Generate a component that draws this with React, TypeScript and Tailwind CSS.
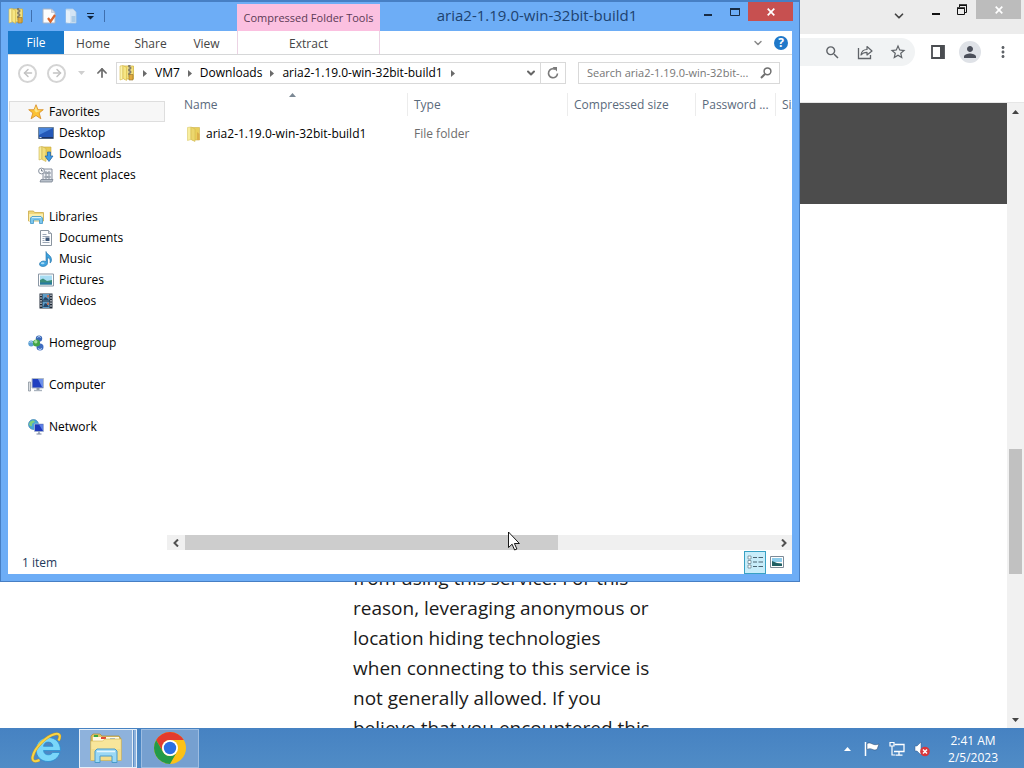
import type { ReactNode } from 'react';
import { ChevronDown, ArrowLeft, ArrowRight, ArrowUp, Search } from 'lucide-react';
import { MdSearch, MdStarOutline, MdPerson, MdMoreVert } from 'react-icons/md';

const FONT = "font-['Open_Sans','Noto_Sans',sans-serif]";

function ZipFolderIcon() {
  return (
    <svg className="size-4 shrink-0" viewBox="0 0 16 16" aria-hidden="true">
      <path d="M5 1h9.500v13H5z" fill="#f3e07c" stroke="#d0ad34" strokeWidth=".7" />
      <path d="M1 1l3-.5V14l-3 1z" fill="#fbf3ae" stroke="#d6b94a" strokeWidth=".6" />
      <path d="M4 .5L7.500 2.500V15.500L4 13.500z" fill="#f6e685" stroke="#cfae3a" strokeWidth=".5" />
      <path d="M9.500 0h2.500v12h-2.500z" fill="#b5ad8b" />
      <path d="M9 1h2M10.500 3h2M9 5h2M10.500 7h2M9 9h2" stroke="#57534a" strokeWidth="1.200" />
      <path d="M10 9.500h4v5.500h-4z" fill="#e0a93f" stroke="#94742a" strokeWidth=".6" />
    </svg>
  );
}

function FolderIcon() {
  return (
    <svg className="size-4 shrink-0" viewBox="0 0 16 16" aria-hidden="true">
      <path d="M6 1.500h7.500V14H6z" fill="#e9cf5b" stroke="#cfb34a" strokeWidth=".6" />
      <path d="M1.500 1.500L5 1v12.500l-3.500 1z" fill="#f8ee9e" stroke="#dcc968" strokeWidth=".6" />
      <path d="M5 1l4 2v12.500l-4-2z" fill="#ecd76d" stroke="#d4ba51" strokeWidth=".6" />
      <path d="M11 6l2.500 2v6H11z" fill="#dcae4a" />
    </svg>
  );
}

function PropertiesIcon() {
  return (
    <svg className="size-4" viewBox="0 0 16 16" aria-hidden="true">
      <path d="M2 1h8.500L14 4.500V15H2z" fill="#fdfdfd" stroke="#a9b3c4" />
      <path d="M10.500 1v3.500H14z" fill="#d5dce8" stroke="#a9b3c4" strokeWidth=".5" />
      <path d="M7 10l2.500 3.500L14 7" fill="none" stroke="#d9652d" strokeWidth="2.200" />
    </svg>
  );
}

function NewFolderIcon() {
  return (
    <svg className="size-4" viewBox="0 0 16 16" aria-hidden="true">
      <path d="M3 1h7l3 3v11H3z" fill="#d3e4f4" stroke="#b2cbe4" strokeWidth=".8" />
      <path d="M3 2l4 1.500V15l-4-1z" fill="#e6f0f9" />
      <path d="M8.500 8h4v6h-4z" fill="#a9cbe8" />
    </svg>
  );
}

function StarIcon() {
  return (
    <svg className="size-4" viewBox="0 0 16 16" aria-hidden="true">
      <path d="M8 .7l2 5h5.300L11.200 9l1.700 5.800L8 11.500l-4.900 3.300L4.800 9 .7 5.700H6z" fill="#fbc233" stroke="#d78a24" strokeWidth=".8" />
      <path d="M8 2.500l1.300 4h3.500L8 8.500 6.300 6z" fill="#fde58a" />
    </svg>
  );
}

function DesktopIcon() {
  return (
    <svg className="size-4" viewBox="0 0 16 16" aria-hidden="true">
      <path d="M.5 2.500h15v11H.5z" fill="#2458b8" stroke="#6f8399" />
      <path d="M1 3h14L1 10z" fill="#4a86dc" />
      <path d="M1 12h14v1.500H1z" fill="#1d3263" />
      <path d="M1.500 12.500h2" stroke="#c9dbf0" />
    </svg>
  );
}

function DownloadsIcon() {
  return (
    <svg className="size-4" viewBox="0 0 16 16" aria-hidden="true">
      <path d="M5 1h8v12H5z" fill="#e9cc55" stroke="#c9a73c" strokeWidth=".6" />
      <path d="M1 1l3-.5V13l-3 1z" fill="#f8ec9d" stroke="#cbb14f" strokeWidth=".6" />
      <path d="M4 .5l4 2v13l-4-2z" fill="#f2de7c" stroke="#cbb14f" strokeWidth=".6" />
      <path d="M9.500 6h3v4H15l-4 5.500L7 10h2.500z" fill="#3f9ae6" stroke="#1e61a8" strokeWidth=".7" />
    </svg>
  );
}

function RecentIcon() {
  return (
    <svg className="size-4" viewBox="0 0 16 16" aria-hidden="true">
      <path d="M5 2h9v11H5z" fill="#eef1f5" stroke="#7b8593" strokeWidth=".9" />
      <path d="M7 5h2v2H7zM10 5h2v2h-2zM7 9h2v2H7zM10 9h2v2h-2z" fill="#fff" stroke="#6b7787" strokeWidth=".8" />
      <path d="M3 12.500h12l-1 2.500H2z" fill="#b8c0ca" stroke="#7b8593" strokeWidth=".8" />
      <circle cx="3.500" cy="4" r="2.900" fill="#fbfcfd" stroke="#7b8593" strokeWidth=".9" />
      <path d="M3.500 2.200V4H5" fill="none" stroke="#566272" strokeWidth=".8" />
    </svg>
  );
}

function LibrariesIcon() {
  return (
    <svg className="size-4" viewBox="0 0 16 16" aria-hidden="true">
      <path d="M.5 2h5l1 1.500h9V12H.5z" fill="#f0d77a" stroke="#c9aa49" strokeWidth=".8" />
      <path d="M1 5h14v7H1z" fill="#fbeeac" />
      <path d="M2.500 14.500V9L4 7.500h9L14.500 9v5.500h-3V11h-6v3.500z" fill="#7cc7ee" stroke="#4297c8" strokeWidth=".8" />
      <path d="M4 8.500h9" stroke="#d6f1fd" />
    </svg>
  );
}

function DocumentsIcon() {
  return (
    <svg className="size-4" viewBox="0 0 16 16" aria-hidden="true">
      <path d="M2.500.5h8l3 3v12h-11z" fill="#fcfdfe" stroke="#8a949f" />
      <path d="M10.500.5v3h3" fill="#d5dae1" stroke="#8a949f" strokeWidth=".8" />
      <path d="M4.500 4.500h4M4.500 6.500h7M4.500 8.500h2M4.500 10.500h2M4.500 12.500h7" stroke="#9aa5b4" />
      <path d="M7.500 7.500h4V11h-4z" fill="#3d5678" />
    </svg>
  );
}

function MusicIcon() {
  return (
    <svg className="size-4" viewBox="0 0 16 16" aria-hidden="true">
      <path d="M8 .5c.5 3 5.500 3.500 5.500 8.500 0 1-.5 2.500-1.500 3 .8-3-.5-5-2.500-5.500v5.500c0 2-2 3.500-4.500 3.500s-3.500-1-3.500-2.500S3.500 10 5.500 10c1 0 1.800.2 2.500.7z" fill="#3fa3df" stroke="#1d6da5" strokeWidth=".6" />
      <ellipse cx="4.700" cy="12.200" rx="1.800" ry="1" fill="#a9dcf7" />
    </svg>
  );
}

function PicturesIcon() {
  return (
    <svg className="size-4" viewBox="0 0 16 16" aria-hidden="true">
      <path d="M.5 2h15v12H.5z" fill="#fff" stroke="#8b97a5" />
      <path d="M2 3.500h12V9H2z" fill="#a7dcf3" />
      <path d="M2 8l3-1.500L9 9l5-1v4.500H2z" fill="#3b8d78" />
      <path d="M2 10.500h12v2H2z" fill="#2879a0" />
    </svg>
  );
}

function VideosIcon() {
  return (
    <svg className="size-4" viewBox="0 0 16 16" aria-hidden="true">
      <path d="M1.500.5h13v15h-13z" fill="#202a38" />
      <path d="M4.500 1h7v6.500h-7zM4.500 8.500h7V15h-7z" fill="#5d9cc6" />
      <path d="M5 7l2-3 2 1 2 2zM5 14l2-4 2 1 2 3z" fill="#24476a" />
      <path d="M9 2h2v2.500H9zM9 9.500h2V12H9z" fill="#b8725c" />
      <path d="M3 1.500v13M13 1.500v13" stroke="#e8edf2" strokeWidth="1.200" strokeDasharray="1.500 1.200" />
    </svg>
  );
}

function HomegroupIcon() {
  return (
    <svg className="size-4" viewBox="0 0 16 16" aria-hidden="true">
      <circle cx="3.200" cy="8.500" r="2.900" fill="#5b9fd3" />
      <circle cx="11" cy="3.600" r="3.200" fill="#3a68b8" />
      <circle cx="12" cy="12" r="3.500" fill="#3f6cc0" />
      <circle cx="8.500" cy="8" r="3.600" fill="#43a548" />
      <circle cx="7.800" cy="6.800" r="1.700" fill="#a7dfa0" />
      <path d="M9.300 2.500c1-1.200 2.600-1.200 3.400 0M10 13.300c1 1.500 3 1.500 4 0M1.500 7.500c1-1 2-1 3 0" stroke="#c4def6" fill="none" />
    </svg>
  );
}

function ComputerIcon() {
  return (
    <svg className="size-4" viewBox="0 0 16 16" aria-hidden="true">
      <path d="M.5 5h2v9h-2z" fill="#d9dde2" stroke="#8c949e" strokeWidth=".8" />
      <path d="M4 1.500h11.500V11H4z" fill="#1f3fc0" stroke="#b0bac6" />
      <path d="M10 2h5v8h-1z" fill="#6d90ea" />
      <path d="M8.500 11h3v2h-3z" fill="#8d98a6" />
      <path d="M6 13.500h8" stroke="#aab3be" strokeWidth="1.400" />
    </svg>
  );
}

function NetworkIcon() {
  return (
    <svg className="size-4" viewBox="0 0 16 16" aria-hidden="true">
      <circle cx="5.500" cy="5.500" r="5" fill="#4aa5d8" stroke="#3178a8" strokeWidth=".6" />
      <path d="M2 3c2-2 4-2 5-.5-1 2-3 1-3 3.500S2 7 1 5.500z" fill="#83cf7b" />
      <path d="M6.500 5h9v7.500h-9z" fill="#1e38bb" stroke="#a9b8d0" strokeWidth=".8" />
      <path d="M11 5.500h4V12z" fill="#5c7fe6" />
      <path d="M11 12.500v2M8.500 15h5" stroke="#7885a0" strokeWidth="1.200" />
    </svg>
  );
}

type NavItem = { label: string; icon: ReactNode };
const groups: { head: NavItem; items: NavItem[] }[] = [
  {
    head: { label: 'Favorites', icon: <StarIcon /> },
    items: [
      { label: 'Desktop', icon: <DesktopIcon /> },
      { label: 'Downloads', icon: <DownloadsIcon /> },
      { label: 'Recent places', icon: <RecentIcon /> },
    ],
  },
  {
    head: { label: 'Libraries', icon: <LibrariesIcon /> },
    items: [
      { label: 'Documents', icon: <DocumentsIcon /> },
      { label: 'Music', icon: <MusicIcon /> },
      { label: 'Pictures', icon: <PicturesIcon /> },
      { label: 'Videos', icon: <VideosIcon /> },
    ],
  },
  { head: { label: 'Homegroup', icon: <HomegroupIcon /> }, items: [] },
  { head: { label: 'Computer', icon: <ComputerIcon /> }, items: [] },
  { head: { label: 'Network', icon: <NetworkIcon /> }, items: [] },
];

function Sidebar() {
  return (
    <nav className="flex w-[159px] shrink-0 flex-col gap-[21px] pl-px pt-2 text-black">
      {groups.map((g, i) => (
        <div key={g.head.label} className="w-[156px]">
          <a
            href="#"
            className={
              i === 0
                ? 'flex h-[21px] items-center gap-[5px] border border-[#dedede] bg-[#f7f7f7] pl-[18px]'
                : 'flex h-[21px] items-center gap-[5px] pl-[19px]'
            }
          >
            {g.head.icon}
            {g.head.label}
          </a>
          {g.items.map((it) => (
            <a key={it.label} href="#" className="flex h-[21px] items-center gap-[5px] pl-[29px]">
              {it.icon}
              {it.label}
            </a>
          ))}
        </div>
      ))}
    </nav>
  );
}

function Crumb() {
  return (
    <svg className="mx-2 h-[7px] w-1 shrink-0" viewBox="0 0 4 7" aria-hidden="true">
      <path d="M0 0l4 3.500L0 7z" fill="#6a6a6a" />
    </svg>
  );
}

function TitleBar() {
  return (
    <header className="flex h-[31px] shrink-0 items-start">
      <div className="flex h-[31px] w-[237px] shrink-0 items-center pl-2">
        <ZipFolderIcon />
        <span className="ml-[7px] mr-[9px] h-3 w-px bg-[#3f6fae]" />
        <button aria-label="Properties"><PropertiesIcon /></button>
        <button aria-label="New folder" className="ml-[6px]"><NewFolderIcon /></button>
        <button aria-label="Customize" className="ml-2 pt-[2px]">
          <svg className="h-[7px] w-[7px]" viewBox="0 0 7 7" aria-hidden="true">
            <path d="M0 .5h7" stroke="#10243c" />
            <path d="M0 3h7L3.500 6.500z" fill="#10243c" />
          </svg>
        </button>
        <span className="ml-[10px] h-3 w-px bg-[#3f6fae]" />
      </div>
      <div className="mt-1 flex h-[27px] w-[143px] shrink-0 items-center justify-center bg-[#fbc0e0] text-[11px] text-[#5b3a55]">
        Compressed Folder Tools
      </div>
      <h1 className="h-[31px] grow text-center text-[15px] leading-[31px] text-[#1d426f]">
        aria2-1.19.0-win-32bit-build1
      </h1>
      <div className="flex shrink-0 pr-[7px] pt-[2px]">
        <button aria-label="Minimize" className="flex h-[19px] w-[27px] items-center justify-center">
          <svg className="h-3 w-3" viewBox="0 0 12 12" aria-hidden="true">
            <path d="M2 9h8" stroke="#182c45" strokeWidth="2" />
          </svg>
        </button>
        <button aria-label="Maximize" className="flex h-[19px] w-[27px] items-center justify-center">
          <svg className="h-3 w-3" viewBox="0 0 12 12" aria-hidden="true">
            <path d="M1.500 2.500h9v7h-9z" fill="none" stroke="#182c45" />
            <path d="M1 3h10" stroke="#182c45" strokeWidth="2" />
          </svg>
        </button>
        <button aria-label="Close" className="flex h-[19px] w-[45px] items-center justify-center bg-[#c75050]">
          <svg className="size-2" viewBox="0 0 8 8" aria-hidden="true">
            <path d="M.7.7l6.600 6.600M7.300.7L.7 7.300" stroke="#fff" strokeWidth="1.700" />
          </svg>
        </button>
      </div>
    </header>
  );
}

function RibbonTabs() {
  return (
    <div className="flex h-6 shrink-0 items-stretch border-b border-[#d6d7d8] text-[#444]">
      <button className="w-14 bg-[#1979ca] pt-px text-white">File</button>
      <button className="w-[58px] pt-[2px]">Home</button>
      <button className="w-[57px] pt-[2px]">Share</button>
      <button className="w-[55px] pt-[2px]">View</button>
      <button className="ml-[3px] w-[143px] border-x border-[#ecd3e4] pt-[2px] text-center">Extract</button>
      <div className="ml-auto flex items-center gap-[10px] pr-1">
        <button aria-label="Collapse ribbon"><ChevronDown className="size-3 text-[#8a8a8a]" strokeWidth={3} /></button>
        <button aria-label="Help" className="flex size-[14px] items-center justify-center rounded-full bg-[#1f78c9] text-[12px] font-bold leading-[14px] text-white">?</button>
      </div>
    </div>
  );
}

function AddressRow() {
  return (
    <div className="flex h-[38px] shrink-0 items-center pb-[2px] pl-[10px] pr-3">
      <button aria-label="Back" className="flex size-[19px] items-center justify-center rounded-full border-2 border-[#d4d4d4] text-[#c2c2c2]">
        <ArrowLeft className="size-3" strokeWidth={3} />
      </button>
      <button aria-label="Forward" className="ml-[10px] flex size-[19px] items-center justify-center rounded-full border-2 border-[#d4d4d4] text-[#c2c2c2]">
        <ArrowRight className="size-3" strokeWidth={3} />
      </button>
      <button aria-label="Recent locations" className="ml-3">
        <svg className="h-1 w-[7px]" viewBox="0 0 7 4" aria-hidden="true"><path d="M0 0h7L3.500 4z" fill="#cfcfcf" /></svg>
      </button>
      <button aria-label="Up" className="ml-[10px]">
        <ArrowUp className="size-[14px] text-[#6d6d6d]" strokeWidth={3} />
      </button>
      <div className="ml-[7px] flex h-[22px] min-w-0 grow items-center border border-[#d9d9d9] pl-[2px] text-black">
        <ZipFolderIcon />
        <Crumb />
        <a href="#">VM7</a>
        <Crumb />
        <a href="#">Downloads</a>
        <Crumb />
        <a href="#" className="whitespace-nowrap">aria2-1.19.0-win-32bit-build1</a>
        <Crumb />
        <button aria-label="Previous locations" className="ml-auto mr-[3px]"><ChevronDown className="size-3 text-[#666]" strokeWidth={4} /></button>
        <button aria-label="Refresh" className="flex h-full w-[25px] items-center justify-center border-l border-[#d9d9d9]">
          <svg className="size-3" viewBox="0 0 12 12" aria-hidden="true">
            <path d="M8 2.200A4.500 4.500 0 1 0 10.500 6.500" fill="none" stroke="#7a7a7a" strokeWidth="1.600" />
            <path d="M5.500 0H10v4.500z" fill="#7a7a7a" />
          </svg>
        </button>
      </div>
      <label className="ml-3 flex h-[22px] w-[202px] shrink-0 items-center border border-[#d9d9d9] pl-2 pr-[7px]">
        <input aria-label="Search folder" placeholder="Search aria2-1.19.0-win-32bit-..." className="w-0 grow bg-transparent text-[11px] outline-none placeholder:text-[#767676]" />
        <svg className="size-3 shrink-0" viewBox="0 0 12 12" aria-hidden="true">
          <circle cx="7.500" cy="4.300" r="3.400" fill="none" stroke="#6f6f6f" strokeWidth="1.500" />
          <path d="M5 7L1 11" stroke="#6f6f6f" strokeWidth="2" />
        </svg>
      </label>
    </div>
  );
}

function FileTable() {
  return (
    <div className="relative min-h-0 grow overflow-hidden pl-[11px]">
      <table className="w-[700px] table-fixed border-separate border-spacing-0 text-left">
        <colgroup>
          <col className="w-[230px]" />
          <col className="w-[160px]" />
          <col className="w-[128px]" />
          <col className="w-20" />
          <col />
        </colgroup>
        <thead>
          <tr className="h-[23px] text-[#5a6a7c]">
            {['Name', 'Type', 'Compressed size', 'Password ...', 'Size'].map((h) => (
              <th key={h} className="border-r border-[#ececec] pl-[6px] font-normal">{h}</th>
            ))}
          </tr>
        </thead>
        <tbody>
          <tr className="h-9">
            <td className="pl-2 text-black">
              <span className="flex items-center gap-1"><FolderIcon />aria2-1.19.0-win-32bit-build1</span>
            </td>
            <td className="pl-[6px] text-[#6d6d6d]">File folder</td>
            <td /><td /><td />
          </tr>
        </tbody>
      </table>
      <svg className="absolute left-[122px] top-0 h-1 w-[7px]" viewBox="0 0 7 4" aria-hidden="true">
        <path d="M0 4h7L3.500 0z" fill="#7b8894" />
      </svg>
    </div>
  );
}

function HScroll() {
  return (
    <div className="flex h-[15px] shrink-0 items-center bg-[#f0f0f0]">
      <button aria-label="Scroll left" className="flex w-[18px] justify-center">
        <svg className="h-2 w-[6px]" viewBox="0 0 6 8" aria-hidden="true"><path d="M5 .5L1.500 4 5 7.500" fill="none" stroke="#505050" strokeWidth="2" /></svg>
      </button>
      <div className="h-[15px] w-[373px] bg-[#cdcdcd]" />
      <button aria-label="Scroll right" className="ml-auto flex w-[17px] justify-center">
        <svg className="h-2 w-[6px]" viewBox="0 0 6 8" aria-hidden="true"><path d="M1 .5L4.500 4 1 7.500" fill="none" stroke="#505050" strokeWidth="2" /></svg>
      </button>
    </div>
  );
}

function StatusBar() {
  return (
    <footer className="flex h-6 shrink-0 items-center pl-[14px] pr-1 text-[#1e395b]">
      <span className="pt-[2px]">1 item</span>
      <button aria-label="Details view" className="ml-auto flex h-[23px] w-[22px] items-center justify-center border border-[#38a1c4] bg-[#c8edfa]">
        <svg className="size-4" viewBox="0 0 16 16" aria-hidden="true">
          <path d="M1 2h3v3H1zM1 6.500h3v3H1zM1 11h3v3H1z" fill="#fff" stroke="#6b8896" strokeWidth=".8" />
          <path d="M6 3.500h4M11.500 3.500H16M6 8h4M11.500 8H16M6 12.500h4M11.500 12.500H16" stroke="#4b6472" />
        </svg>
      </button>
      <button aria-label="Large icons view" className="flex h-[23px] w-[22px] items-center justify-center">
        <svg className="h-3 w-[14px]" viewBox="0 0 14 12" aria-hidden="true">
          <path d="M.5.5h13v11H.5z" fill="#fff" stroke="#7d8a97" />
          <path d="M2 2h10v4H2z" fill="#8fcdeb" />
          <path d="M2 5l5 2 5 .5V10H2z" fill="#205f63" />
        </svg>
      </button>
    </footer>
  );
}

function ExplorerWindow() {
  return (
    <section className="absolute left-0 top-0 flex h-[582px] w-[800px] flex-col border border-t-2 border-[#477fc4] bg-[#6dadf6] pb-[7px] text-[12px] leading-4">
      <div className="-mt-[2px] flex min-h-0 grow flex-col">
        <div className="-mx-px"><TitleBar /></div>
        <div className="mx-[7px] flex min-h-0 grow flex-col bg-white">
          <RibbonTabs />
          <AddressRow />
          <div className="flex min-h-0 grow">
            <Sidebar />
            <div className="flex min-w-0 grow flex-col">
              <FileTable />
              <HScroll />
            </div>
          </div>
          <StatusBar />
        </div>
      </div>
    </section>
  );
}

function Browser() {
  return (
    <main className="flex h-full flex-col overflow-hidden bg-white">
      <div className="flex h-[34px] shrink-0 items-start justify-end bg-[#ececec]">
        <button aria-label="Search tabs" className="mr-4 mt-[9px]"><ChevronDown className="size-[14px] text-[#444]" strokeWidth={3} /></button>
        <button aria-label="Minimize browser" className="flex h-[19px] w-[27px] items-center justify-center pt-1">
          <svg className="size-3" viewBox="0 0 12 12" aria-hidden="true"><path d="M2 8h8" stroke="#111" strokeWidth="2" /></svg>
        </button>
        <button aria-label="Restore browser" className="mr-px flex h-[19px] w-[26px] items-center justify-center">
          <svg className="size-3" viewBox="0 0 12 12" aria-hidden="true">
            <path d="M3.500 3V1.500h7v7H9" fill="none" stroke="#111" />
            <path d="M1.500 4.500h7v6h-7z" fill="none" stroke="#111" />
            <path d="M1 4h8M3 1h8" stroke="#111" strokeWidth="1.500" />
          </svg>
        </button>
        <button aria-label="Close browser" className="mr-[3px] flex h-[19px] w-[45px] items-center justify-center bg-[#bcbcbc]">
          <svg className="size-2" viewBox="0 0 8 8" aria-hidden="true"><path d="M.7.7l6.600 6.600M7.300.7L.7 7.300" stroke="#fff" strokeWidth="1.700" /></svg>
        </button>
      </div>
      <div className="flex h-9 shrink-0 items-center pr-3 text-[#5f6368]">
        <div className="flex h-7 grow items-center justify-end gap-4 rounded-full bg-[#f1f3f4] pr-2">
          <button aria-label="Find"><MdSearch className="size-[17px]" /></button>
          <button aria-label="Share page">
            <svg className="size-4" viewBox="0 0 16 16" aria-hidden="true">
              <path d="M1.500 4v10.500h12V11" fill="none" stroke="#5f6368" strokeWidth="1.300" />
              <path d="M4 11c.5-4 3-5.500 6-5.500V2.500L15 7l-5 4V8.300C7.500 8.300 5.500 9 4 11z" fill="none" stroke="#5f6368" strokeWidth="1.200" strokeLinejoin="round" />
            </svg>
          </button>
          <button aria-label="Bookmark"><MdStarOutline className="size-[18px]" /></button>
        </div>
        <button aria-label="Side panel" className="ml-4">
          <svg className="h-[14px] w-[14px]" viewBox="0 0 14 14" aria-hidden="true">
            <path d="M1 1h12v12H1z" fill="#fff" stroke="#4a4d51" strokeWidth="1.800" />
            <path d="M9 1h4v12H9z" fill="#4a4d51" />
          </svg>
        </button>
        <button aria-label="Profile" className="ml-[14px] flex size-[22px] items-center justify-center rounded-full bg-[#dfe2e7] text-[#4b4f5a]"><MdPerson className="size-[18px]" /></button>
        <button aria-label="Menu" className="ml-[13px]"><MdMoreVert className="size-[18px]" /></button>
      </div>
      <div className="h-[33px] shrink-0 border-b border-[#e6e6e6]" />
      <div className="flex min-h-0 grow">
        <div className="min-w-0 grow overflow-hidden">
          <div className="h-[101px] bg-[#4c4c4c]" />
          <p className="ml-[353px] mt-[359px] whitespace-nowrap text-[19px] leading-[30px] text-[#1a1a1a]">
            from using this service. For this<br />
            reason, leveraging anonymous or<br />
            location hiding technologies<br />
            when connecting to this service is<br />
            not generally allowed. If you<br />
            believe that you encountered this
          </p>
        </div>
        <div className="flex w-[17px] shrink-0 flex-col items-center bg-[#f1f1f1]">
          <div className="flex h-[17px] items-center">
            <svg className="h-1 w-[7px]" viewBox="0 0 7 4" aria-hidden="true"><path d="M0 4h7L3.500 0z" fill="#444" /></svg>
          </div>
          <div className="mt-[329px] h-[125px] w-[13px] bg-[#c1c1c1]" />
          <div className="mt-auto flex h-[17px] items-center">
            <svg className="h-1 w-[7px]" viewBox="0 0 7 4" aria-hidden="true"><path d="M0 0h7L3.500 4z" fill="#444" /></svg>
          </div>
        </div>
      </div>
    </main>
  );
}

function Taskbar() {
  return (
    <footer className="flex h-10 shrink-0 items-center bg-linear-to-b from-[#4682c2] to-[#508cc6] text-white">
      <button aria-label="Internet Explorer" className="ml-[31px]">
        <svg className="size-8" viewBox="0 0 32 32" aria-hidden="true">
          <path d="M29.500 18.500H12.500c.4 3 2.200 4.300 4.700 4.300 2 0 3.500-.8 4.500-2.300H29C27.300 26 23 29.500 17 29.500 10 29.500 5 24.500 5 17.500S10 5.500 17.200 5.500s12.300 5 12.300 13zM12.500 14.300H22c-.4-2.700-2.200-4.200-4.800-4.200s-4.200 1.500-4.700 4.200z" fill="#7ad6f9" stroke="#2b8fd2" strokeWidth=".8" />
          <path d="M27.500 8.500C30.500 3 28 1 23.500 2.200 15.500 4.300 4 15 1.700 24.500c-1 4.500 1.800 6 6.800 3.500" fill="none" stroke="#c9961a" strokeWidth="2.800" />
          <path d="M27.500 8.500C30.500 3 28 1 23.500 2.200 15.500 4.300 4 15 1.700 24.500c-1 4.500 1.800 6 6.800 3.500" fill="none" stroke="#f7d548" strokeWidth="2" />
        </svg>
      </button>
      <button aria-label="File Explorer" className="ml-4 flex h-[39px] w-[58px] border border-[#e4eef8] bg-[#8eb2dc]">
        <span className="flex h-full w-[53px] items-center justify-center border-r border-[#e4eef8] shadow-[1px_0_0_#5f8fc6]">
          <svg className="size-8" viewBox="0 0 32 32" aria-hidden="true">
            <path d="M1 4l2-2h7l2 2h17l2 3v21H1z" fill="#dfc466" stroke="#a9893a" strokeWidth=".7" />
            <path d="M3 5h26v5H3z" fill="#fffbe6" />
            <path d="M4 3h4v2H4z" fill="#39a845" />
            <path d="M11 5h5v2h-5z" fill="#e0493a" />
            <path d="M20 6.500h5v2h-5z" fill="#3d82ce" />
            <path d="M.7 9h12l2-2h16.600v21.500H.7z" fill="#f8e69b" stroke="#d0b252" strokeWidth=".6" />
            <path d="M1 17h30v11H1z" fill="#f3dd8b" />
            <path d="M5 30.500V19l2-2h18l2 2v11.500h-5V24H10v6.500z" fill="#9ad8f5" stroke="#4a9bca" />
            <path d="M7 19.500h18" stroke="#e3f6fe" strokeWidth="1.500" />
          </svg>
        </span>
      </button>
      <button aria-label="Chrome" className="ml-1 flex h-[39px] w-[58px] items-center justify-center border border-[#9dbde2] bg-[#76a0d0]">
        <svg className="size-8" viewBox="0 0 32 32" aria-hidden="true">
          <circle cx="16" cy="16" r="16" fill="#fbc116" />
          <path d="M2.150 8A16 16 0 0 1 29.850 8H16a8 8 0 0 0-6.930 12z" fill="#e33b2e" />
          <path d="M2.150 8A16 16 0 0 0 16 32l6.930-12A8 8 0 0 1 9.070 20z" fill="#229a49" />
          <circle cx="16" cy="16" r="8" fill="#fff" />
          <circle cx="16" cy="16" r="6.200" fill="#2b6fe3" />
        </svg>
      </button>
      <div className="ml-auto flex items-center pr-[26px] pt-[2px]">
        <button aria-label="Show hidden icons">
          <svg className="h-1 w-[7px]" viewBox="0 0 7 4" aria-hidden="true"><path d="M0 4h7L3.500 0z" fill="#fff" /></svg>
        </button>
        <svg className="ml-[13px] size-4" viewBox="0 0 16 16" aria-hidden="true">
          <path d="M1.500 1v14" stroke="#fff" strokeWidth="1.500" />
          <path d="M3 2.500c2-1 3.500-.5 5 .3 2 1 4 1.300 7 .2l-2 5.500c-2 .8-3.500.5-5-.3S5 7.500 3 8.500z" fill="#fff" stroke="#24476f" strokeWidth=".5" />
        </svg>
        <svg className="ml-[9px] size-4" viewBox="0 0 16 16" aria-hidden="true">
          <path d="M5.500 3.500h9.500v7H5M10 10.500V14M6.500 14.200h7" fill="none" stroke="#fff" strokeWidth="1.300" />
          <path d="M1 1.500h4V5H1zM3 5v9h3" fill="none" stroke="#fff" strokeWidth="1.200" />
        </svg>
        <svg className="ml-[9px] size-4" viewBox="0 0 16 16" aria-hidden="true">
          <path d="M1 5h2l4-4v13l-4-4H1z" fill="#fff" stroke="#34598a" strokeWidth=".5" />
          <circle cx="11" cy="10.500" r="4.800" fill="#d9363a" />
          <path d="M9 8.500l4 4M13 8.500l-4 4" stroke="#fff" strokeWidth="1.500" />
        </svg>
        <time className="ml-[18px] text-center text-[12px] leading-[17px]">2:41 AM<br />2/5/2023</time>
      </div>
    </footer>
  );
}

export default function App() {
  return (
    <div className={`${FONT} flex h-screen flex-col overflow-hidden`}>
      <div className="relative min-h-0 grow overflow-hidden">
        <Browser />
        <ExplorerWindow />
        <svg className="absolute left-[508px] top-[531px] h-5 w-3" viewBox="0 0 12 20" aria-hidden="true">
          <path d="M.5 1v15.500l3.600-3.300 2.500 5.800 2.300-1-2.500-5.500h5z" fill="#fff" stroke="#000" strokeWidth=".9" />
        </svg>
      </div>
      <Taskbar />
    </div>
  );
}
